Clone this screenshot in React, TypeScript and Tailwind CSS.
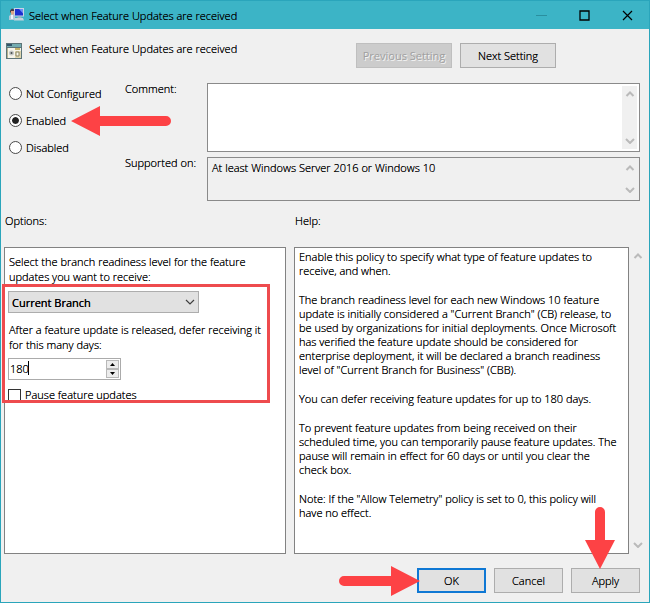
import { useState } from "react";
import clsx from "clsx";

const states = ["Not Configured", "Enabled", "Disabled"];

const helpText = `Enable this policy to specify what type of feature updates to
receive, and when.

The branch readiness level for each new Windows 10 feature
update is initially considered a "Current Branch" (CB) release, to
be used by organizations for initial deployments. Once Microsoft
has verified the feature update should be considered for
enterprise deployment, it will be declared a branch readiness
level of "Current Branch for Business" (CBB).

You can defer receiving feature updates for up to 180 days.

To prevent feature updates from being received on their
scheduled time, you can temporarily pause feature updates. The
pause will remain in effect for 60 days or until you clear the
check box.

Note: If the "Allow Telemetry" policy is set to 0, this policy will
have no effect.`;

function Chevron({ up = false, thin = false, className = "" }) {
  return (
    <svg
      className={clsx("h-[6px] w-[10px] shrink-0", className)}
      viewBox="0 0 10 6"
      fill="none"
      stroke="currentColor"
      strokeWidth={thin ? 1.2 : 2}
    >
      <path d={up ? "M1.5 5 5 1.5 8.5 5" : "M1 1 5 5 9 1"} />
    </svg>
  );
}

function ScrollBar({ className = "" }) {
  return (
    <div
      className={clsx(
        "flex flex-col items-center justify-between bg-[#f0f0f0] text-[#bababa]",
        className
      )}
    >
      <Chevron up />
      <Chevron />
    </div>
  );
}

interface ArrowProps {
  length: number;
  direction?: "left" | "right" | "down";
  className?: string;
}

// Red marker arrow, the shaft is stretched to the given length.
function Arrow({ length, direction = "left", className = "" }: ArrowProps) {
  const vertical = direction === "down";
  const transforms = {
    left: "",
    right: `translate(${length} 30) rotate(180)`,
    down: `translate(0 ${length}) rotate(-90)`,
  };

  return (
    <svg
      className={clsx("pointer-events-none absolute z-10", className)}
      width={vertical ? 30 : length}
      height={vertical ? length : 30}
      fill="#fd4245"
    >
      <path
        d={`M0 15 29 0V10H${length - 5}a5 5 0 0 1 0 10H29V30Z`}
        transform={transforms[direction]}
      />
    </svg>
  );
}

function MonitorIcon() {
  return (
    <svg className="h-4 w-4 shrink-0" viewBox="0 0 16 16">
      <path d="M5 1h10v8.5H5z" fill="#c9d3e4" />
      <path d="M6 2h8v6.5H6z" fill="#1a2fd0" />
      <path d="M10 2h4v4.5z" fill="#6f8df5" />
      <path d="M9 9.500h3l1 2H8z" fill="#9fb0bd" />
      <path d="M5 11h9l1 2.500H5z" fill="#c3d3dc" />
      <path d="M1 3.500 3 1.500l2 1v3H1z" fill="#4a3b42" />
      <path d="M2 4h3v4H2z" fill="#dca284" />
      <path d="M0 9l2-1.500h3L6 9v4H0z" fill="#b3c8d8" />
      <path d="M2 8h2v4H2z" fill="#eef3fa" />
    </svg>
  );
}

function PolicyIcon() {
  return (
    <svg className="h-4 w-4 shrink-0" viewBox="0 0 16 16">
      <path d="M0 0h16v16H0z" fill="#5d7478" />
      <path d="M1 1h14v3H1z" fill="#74acb0" />
      <path d="M1 1h5v2H1z" fill="#33556a" />
      <path d="M1 5h14v10H1z" fill="#f6f4e9" />
      <path d="M1 5h1v10H1z" fill="#b5b08d" />
      <path d="M9 5h5v2H9z" fill="#c5b268" />
      <path d="M9 8h6v7H9z" fill="#ded5ae" />
      <circle cx="5.500" cy="10" r="2.500" fill="#c3c6c5" />
      <circle cx="5.500" cy="10" r="1" fill="#454b4c" />
      <path d="M10 9h3v4h-3z" fill="#f8f6ee" stroke="#8a8560" />
    </svg>
  );
}

const buttonBase =
  "flex h-[25px] items-center justify-center bg-[#e1e1e1] [text-shadow:inherit]";

export default function App() {
  const [state, setState] = useState("Enabled");
  const [days, setDays] = useState(180);

  return (
    <div className="flex min-h-screen flex-col border border-[#2aa5bb] bg-[#f0f0f0] font-['Open_Sans','Segoe_UI',sans-serif] text-[11px] leading-[15px] font-light text-black [text-shadow:0_0_black]">
      <header className="flex h-7 shrink-0 items-center bg-[#3cb4c6] pl-2">
        <MonitorIcon />
        <h1 className="ml-1 grow">Select when Feature Updates are received</h1>
        <div className="flex h-full">
          <button
            aria-label="Minimize"
            disabled
            className="flex w-[43px] items-center justify-center text-[#2a8f9f]"
          >
            <svg className="h-[11px] w-[11px]" viewBox="0 0 11 11" stroke="currentColor">
              <path d="M0 5.500h11" />
            </svg>
          </button>
          <button aria-label="Maximize" className="flex w-[43px] items-center justify-center">
            <svg
              className="h-[11px] w-[11px]"
              viewBox="0 0 11 11"
              fill="none"
              stroke="currentColor"
              strokeWidth="1.3"
            >
              <path d="M1 1h9v9H1z" />
            </svg>
          </button>
          <button aria-label="Close" className="flex w-[43px] items-center justify-center">
            <svg
              className="h-[11px] w-[11px]"
              viewBox="0 0 11 11"
              stroke="currentColor"
              strokeWidth="1.2"
            >
              <path d="m1 1 9 9M10 1 1 10" />
            </svg>
          </button>
        </div>
      </header>

      <div className="flex items-start pt-[14px] pl-[5px]">
        <div className="flex w-[350px] gap-[7px]">
          <PolicyIcon />
          <h2 className="-mt-[2px]">Select when Feature Updates are received</h2>
        </div>
        <div className="flex gap-2">
          <button
            disabled
            className="flex h-[25px] w-24 items-center justify-center border border-[#bfbfbf] bg-[#cccccc] font-normal text-[#a0a0a0] [text-shadow:1px_1px_#f4f4f4]"
          >
            Previous Setting
          </button>
          <button className={clsx(buttonBase, "w-24 border border-[#adadad]")}>
            Next Setting
          </button>
        </div>
      </div>

      <div className="mt-[13px] grid grid-cols-[116px_82px_1fr] gap-y-[3px] pr-[9px] pl-2">
        <fieldset className="row-span-2 flex flex-col gap-3 pt-[5px]">
          {states.map((name) => (
            <div key={name} className="relative flex w-fit items-center">
              <label className="flex items-center gap-1">
                <input
                  type="radio"
                  name="state"
                  checked={state === name}
                  onChange={() => setState(name)}
                  className="h-[13px] w-[13px] appearance-none rounded-full border border-[#4a4a4a] bg-white bg-clip-content p-[2px] shadow-[inset_0_0_0_2px_white] checked:bg-[#222222]"
                />
                {name}
              </label>
              {name === "Enabled" && <Arrow length={100} className="left-full ml-[5px]" />}
            </div>
          ))}
        </fieldset>

        <label htmlFor="comment">Comment:</label>
        <div className="mt-[2px] flex h-[69px] border border-[#8a8a8a] bg-white p-[2px]">
          <textarea id="comment" className="min-w-0 grow resize-none px-[3px] outline-none" />
          <ScrollBar className="w-[15px] py-[5px]" />
        </div>

        <label htmlFor="supported">Supported on:</label>
        <div className="mt-[2px] flex h-11 border border-[#8a8a8a] p-[2px]">
          <textarea
            id="supported"
            readOnly
            value="At least Windows Server 2016 or Windows 10"
            className="min-w-0 grow resize-none px-[2px] outline-none [text-shadow:inherit]"
          />
          <ScrollBar className="w-[15px] py-[5px]" />
        </div>
      </div>

      <div className="mt-3 flex">
        <h3 className="w-[290px] pl-1">Options:</h3>
        <h3 className="pl-1">Help:</h3>
      </div>

      <main className="mt-[19px] flex grow pr-[3px] pl-[3px]">
        <section className="w-[282px] shrink-0 border border-[#828282] bg-white pt-[6px] pl-[3px]">
          <label htmlFor="branch" className="block pr-5 pl-px">
            Select the branch readiness level for the feature updates you want to receive:
          </label>

          <div className="relative mt-[7px]">
            <div className="relative w-[191px]">
              <select
                id="branch"
                className="h-[22px] w-full appearance-none border border-[#adadad] bg-[#e1e1e1] px-[3px] font-normal [text-shadow:inherit]"
              >
                <option>Current Branch</option>
                <option>Current Branch for Business</option>
              </select>
              <Chevron
                thin
                className="pointer-events-none absolute top-2 right-1 text-[#404040]"
              />
            </div>

            <label htmlFor="days" className="mt-[9px] block pr-3 pl-px">
              After a feature update is released, defer receiving it for this many days:
            </label>

            <div className="relative mt-[6px] flex h-[22px] w-[113px] border border-[#ababab] p-px">
              <input
                id="days"
                inputMode="numeric"
                value={days}
                onChange={(e) => setDays(Number(e.target.value) || 0)}
                className="min-w-0 grow pb-[2px] outline-none [text-shadow:inherit]"
              />
              <span className="absolute top-[2px] left-[19px] h-[14px] w-px bg-black" />
              <div className="flex w-[13px] shrink-0 flex-col">
                <button
                  aria-label="Increase"
                  onClick={() => setDays(days + 1)}
                  className="flex grow items-center justify-center border border-[#b8b8b8] bg-[#ececec]"
                >
                  <svg className="h-[3px] w-[5px] shrink-0" viewBox="0 0 5 3">
                    <path d="M0 3 2.500 0 5 3z" />
                  </svg>
                </button>
                <button
                  aria-label="Decrease"
                  onClick={() => setDays(days - 1)}
                  className="flex grow items-center justify-center border border-[#b8b8b8] bg-[#ececec]"
                >
                  <svg className="h-[3px] w-[5px] shrink-0" viewBox="0 0 5 3">
                    <path d="M0 0 2.500 3 5 0z" />
                  </svg>
                </button>
              </div>
            </div>

            <label className="mt-2 flex h-3 gap-1 overflow-hidden">
              <input
                type="checkbox"
                className="mt-px h-[13px] w-[13px] shrink-0 appearance-none border border-[#333333] bg-white checked:bg-[#333333]"
              />
              <span className="-mt-px">Pause feature updates</span>
            </label>

            <div className="pointer-events-none absolute -top-[7px] -bottom-[3px] -left-[6px] w-[268px] border-3 border-[#ee4b4e]" />
          </div>
        </section>

        <section className="ml-2 flex grow flex-col gap-[15px] border border-[#828282] bg-white pt-[2px] pr-px pl-1 leading-[14px]">
          {helpText.split("\n\n").map((text) => (
            <p key={text} className="whitespace-pre-line">
              {text}
            </p>
          ))}
        </section>
        <ScrollBar className="w-[17px] shrink-0 py-[6px]" />
      </main>

      <footer className="flex justify-end gap-2 pt-[14px] pr-[9px] pb-[9px]">
        <div className="relative">
          <button className={clsx(buttonBase, "w-[69px] border-2 border-[#0f78d4]")}>OK</button>
          <Arrow length={81} direction="right" className="top-[-2px] right-[66px]" />
        </div>
        <button className={clsx(buttonBase, "w-[69px] border border-[#adadad]")}>Cancel</button>
        <div className="relative">
          <button className={clsx(buttonBase, "w-[69px] border border-[#adadad]")}>Apply</button>
          <Arrow length={62} direction="down" className="bottom-6 left-[14px]" />
        </div>
      </footer>
    </div>
  );
}
